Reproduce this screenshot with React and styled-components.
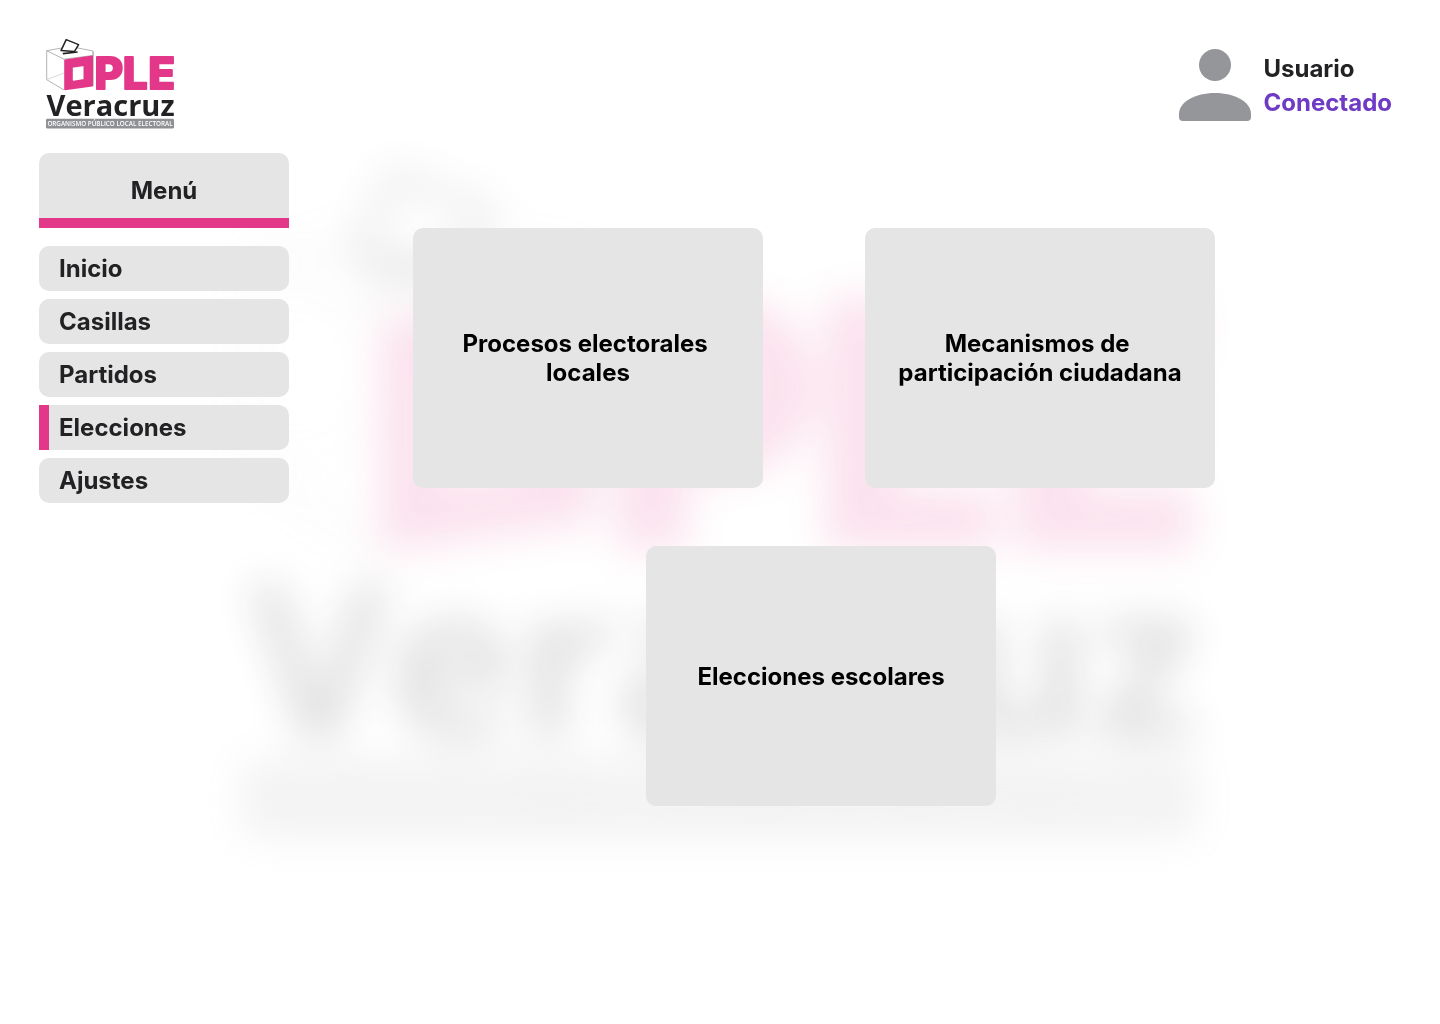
import React from "react";
import styled, { createGlobalStyle } from "styled-components";

const pink = "#e33789";
const panel = "#e5e5e5";
const ink = "#222224";

const GlobalStyle = createGlobalStyle`
  *, *::before, *::after { box-sizing: border-box; }
  body {
    margin: 0;
    background: #fff;
    color: ${ink};
    font-family: Inter, "Liberation Sans", sans-serif;
    font-size: 24px;
    font-weight: 700;
    line-height: 29px;
  }
`;

const Page = styled.div`
  position: relative;
  min-height: 100vh;
  padding: 38px 39px 40px;
`;

const Backdrop = styled.div`
  position: fixed;
  inset: 0;
  z-index: -1;
  display: grid;
  place-items: center;
  opacity: 0.14;
  filter: blur(20px);
  pointer-events: none;

  svg {
    width: 68vw;
    height: auto;
  }
`;

const Header = styled.header`
  display: flex;
  align-items: center;
  justify-content: space-between;
  padding: 0 9px 0 5px;
  margin-bottom: 21px;
`;

const HomeLink = styled.a`
  display: block;

  svg {
    display: block;
    width: 132px;
    height: 94px;
  }
`;

const User = styled.div`
  display: flex;
  align-items: center;
  gap: 12px;
`;

const UserLines = styled.div`
  display: grid;
  gap: 5px;
`;

const UserText = styled.p`
  margin: 0;
  color: ${(p) => (p.$online ? "#6e3ac6" : ink)};
`;

const Body = styled.div`
  display: flex;
  align-items: flex-start;
  gap: 124px;
`;

const Sidebar = styled.nav`
  flex: 0 0 250px;
`;

const MenuTitle = styled.h2`
  display: grid;
  place-items: center;
  min-height: 75px;
  margin: 0 0 18px;
  border-radius: 10px 10px 0 0;
  background: ${panel};
  box-shadow: inset 0 -10px ${pink};
  font-size: 24px;
`;

const MenuList = styled.ul`
  display: grid;
  gap: 8px;
  margin: 0;
  padding: 0;
  list-style: none;
`;

const MenuLink = styled.a`
  display: block;
  padding: 8px 20px;
  border-radius: ${(p) => (p.$active ? "0 10px 10px 0" : "10px")};
  background: ${panel};
  box-shadow: ${(p) => (p.$active ? `inset 10px 0 ${pink}` : "none")};
  color: inherit;
  text-decoration: none;
`;

const Main = styled.main`
  flex: 1;
  display: grid;
  gap: 58px;
  padding-top: 75px;
`;

const CardRow = styled.div`
  display: flex;
  flex-wrap: wrap;
  gap: 58px 102px;
  padding-left: ${(p) => (p.$indented ? "233px" : "0")};
`;

const Card = styled.button`
  width: 350px;
  min-height: 260px;
  padding: 30px;
  border: 0;
  border-radius: 10px;
  background: ${panel};
  color: #000;
  font: inherit;
  text-align: center;
  white-space: break-spaces;
  cursor: pointer;
`;

function Logo(props) {
  return (
    <svg viewBox="0 0 1320 940" {...props}>
      <g fill="none" stroke="#a9aaad" strokeWidth="9" strokeLinejoin="round">
        <path d="M200 212 L27 127 V417 L200 520" />
        <path d="M27 127 L178 100 M330 98 L490 130 V175 L200 212" />
        <path d="M27 417 L200 350" stroke="#d4d5d7" />
        <path d="M492 135 V480" />
      </g>
      <path
        d="M222 16 L346 66 L304 136 L170 126 Z"
        fill="#fff"
        stroke={ink}
        strokeWidth="15"
        strokeLinejoin="round"
      />
      <path d="M188 156 L336 140" stroke={ink} strokeWidth="16" />
      <path
        d="M210 222 L482 184 V478 L210 515 Z M280 290 V437 L403 419 V272 Z"
        fill={pink}
        fillRule="evenodd"
        stroke={pink}
        strokeWidth="16"
        strokeLinejoin="round"
      />
      <text
        x="506 788 1042"
        y="512"
        fill={pink}
        stroke={pink}
        strokeWidth="20"
        strokeLinejoin="round"
        fontFamily="Inter, sans-serif"
        fontSize="440"
        fontWeight="800"
      >
        PLE
      </text>
      <text x="26" y="775" fill={ink} fontFamily="Open Sans, sans-serif" fontSize="290" fontWeight="700">
        Veracruz
      </text>
      <rect x="20" y="808" width="1280" height="98" rx="14" fill="#8f9094" />
      <text x="34" y="880" fill="#fff" fontFamily="Open Sans, sans-serif" fontSize="63" fontWeight="600">
        ORGANISMO PÚBLICO LOCAL ELECTORAL
      </text>
    </svg>
  );
}

function Avatar() {
  return (
    <svg width="72" height="72" viewBox="0 0 72 72" fill="#95969a" aria-hidden="true">
      <circle cx="36" cy="16" r="16" />
      <path d="M0 65C0 53 16 44 36 44S72 53 72 65V68A4 4 0 0 1 68 72H4A4 4 0 0 1 0 68Z" />
    </svg>
  );
}

const menu = ["Inicio", "Casillas", "Partidos", "Elecciones", "Ajustes"];
const current = "Elecciones";

export default function App() {
  return (
    <Page>
      <GlobalStyle />
      <Backdrop aria-hidden="true">
        <Logo />
      </Backdrop>
      <Header>
        <HomeLink href="#inicio" aria-label="OPLE Veracruz">
          <Logo />
        </HomeLink>
        <User>
          <Avatar />
          <UserLines>
            <UserText>Usuario</UserText>
            <UserText $online>Conectado</UserText>
          </UserLines>
        </User>
      </Header>
      <Body>
        <Sidebar aria-labelledby="menu-title">
          <MenuTitle id="menu-title">Menú</MenuTitle>
          <MenuList>
            {menu.map((name) => (
              <li key={name}>
                <MenuLink
                  href={`#${name.toLowerCase()}`}
                  $active={name === current}
                  aria-current={name === current ? "page" : undefined}
                >
                  {name}
                </MenuLink>
              </li>
            ))}
          </MenuList>
        </Sidebar>
        <Main>
          <CardRow>
            <Card type="button">Procesos electorales locales</Card>
            <Card type="button">Mecanismos de participación ciudadana</Card>
          </CardRow>
          <CardRow $indented>
            <Card type="button">Elecciones escolares</Card>
          </CardRow>
        </Main>
      </Body>
    </Page>
  );
}
